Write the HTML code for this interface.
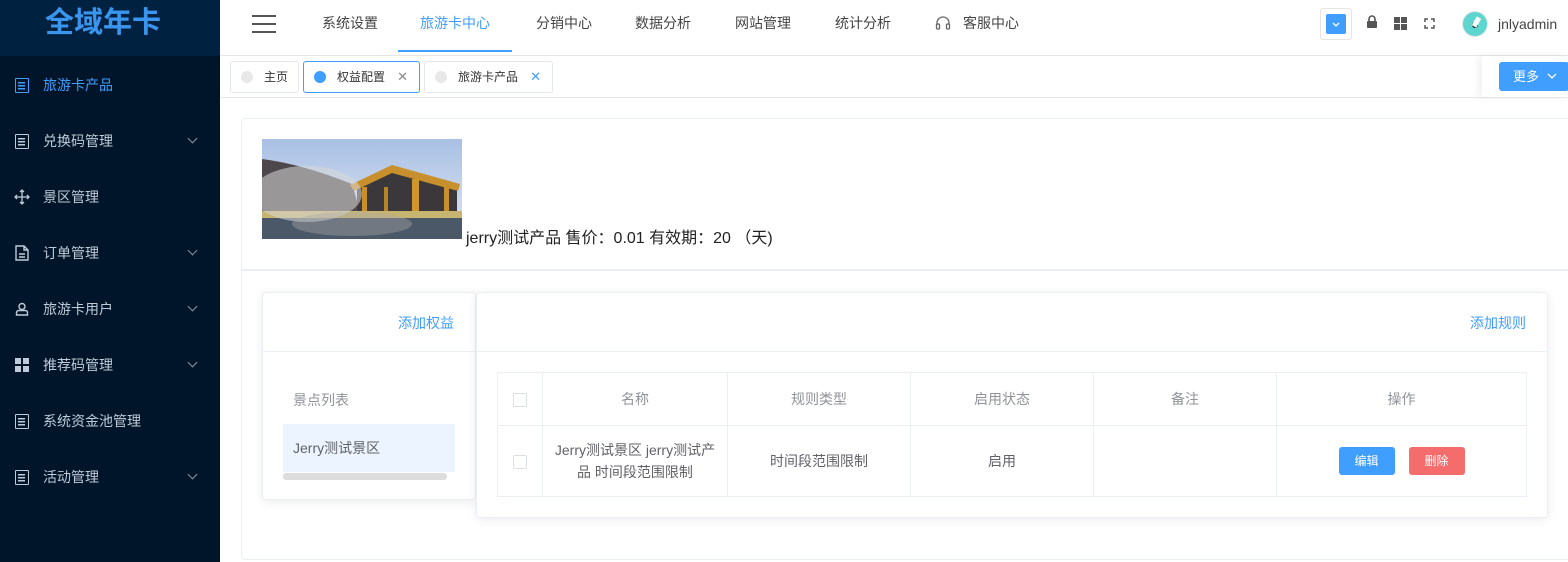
<!DOCTYPE html>
<html><head><meta charset="utf-8"><style>
*{box-sizing:border-box;margin:0;padding:0}
body{width:1568px;height:562px;overflow:hidden;font-family:"Liberation Sans","Noto Sans CJK SC",sans-serif;background:#fff;position:relative;color:#333}
.side{position:absolute;left:0;top:0;width:220px;height:562px;background:#001529}
.logo{height:56px;background:#002140;color:#3a95ee;font-size:29px;font-weight:bold;text-align:center;line-height:46px;padding-right:14px}
.mi{position:absolute;left:0;width:220px;height:56px;color:#bfcbd9;font-size:14px;line-height:56px;padding-left:43px}
.mi .ic{position:absolute;left:15px;top:21px;width:14px;height:15px;border:1.5px solid #bfcbd9;border-radius:1px;background:linear-gradient(#bfcbd9,#bfcbd9) 2px 3px/7px 1.5px no-repeat,linear-gradient(#bfcbd9,#bfcbd9) 2px 6px/7px 1.5px no-repeat,linear-gradient(#bfcbd9,#bfcbd9) 2px 9px/7px 1.5px no-repeat}
.mi .ar{position:absolute;left:189px;top:22px;width:7px;height:7px;border-right:1px solid #8a96a3;border-bottom:1px solid #8a96a3;transform:rotate(45deg)}
.top{position:absolute;left:220px;top:0;right:0;height:56px;border-bottom:1px solid #e6e6e6}
.nav{position:absolute;top:0;height:56px;line-height:46px;font-size:14px;color:#444}
.tags{position:absolute;left:220px;top:56px;right:0;height:42px;border-bottom:1px solid #e6e6e6}
.tag{position:absolute;top:5px;height:32px;border:1px solid #e4e7ed;border-radius:3px;font-size:12px;color:#333;line-height:30px;padding-left:33px}
.tag .d{position:absolute;left:10px;top:9px;width:12px;height:12px;border-radius:50%;background:#e8e8e8}
.tag .x{position:absolute;right:11px;top:0;color:#888;font-size:13px}
.card{position:absolute;border:1px solid #ebeef5;background:#fff;border-radius:4px;box-shadow:0 2px 10px rgba(0,0,0,.08)}
table{border-collapse:collapse;position:absolute;left:497px;top:372px;width:1030px;font-size:14px;color:#606266;text-align:center}
td{border:1px solid #ebeef5}
.cb{display:inline-block;width:14px;height:14px;border:1px solid #dcdfe6;border-radius:2px;background:#fff;vertical-align:middle}
</style></head><body>
<div class="side">
<div class="logo">全域年卡</div>
<div class="mi" style="top:57px;color:#409eff"><span class="ic" style="border-color:#409eff;background:linear-gradient(#409eff,#409eff) 2px 3px/7px 1.5px no-repeat,linear-gradient(#409eff,#409eff) 2px 6px/7px 1.5px no-repeat,linear-gradient(#409eff,#409eff) 2px 9px/7px 1.5px no-repeat"></span>旅游卡产品</div>
<div class="mi" style="top:113px"><span class="ic"></span>兑换码管理<span class="ar"></span></div>
<div class="mi" style="top:169px"><svg style="position:absolute;left:14px;top:20px" width="16" height="16" viewBox="0 0 16 16" fill="none" stroke="#bfcbd9" stroke-width="1.3"><path d="M8 1v14M1 8h14M6 3l2-2 2 2M6 13l2 2 2-2M3 6L1 8l2 2M13 6l2 2-2 2"/></svg>景区管理</div>
<div class="mi" style="top:225px"><svg style="position:absolute;left:15px;top:20px" width="14" height="16" viewBox="0 0 14 16" fill="none" stroke="#bfcbd9" stroke-width="1.4"><path d="M1 1h8l4 4v10H1z M9 1v4h4 M4 9h6M4 12h6"/></svg>订单管理<span class="ar"></span></div>
<div class="mi" style="top:281px"><svg style="position:absolute;left:15px;top:21px" width="14" height="14" viewBox="0 0 14 14" fill="none" stroke="#bfcbd9" stroke-width="1.4"><circle cx="7" cy="4.5" r="3"/><path d="M1.5 13v-2.5c0-1 1-2 2-2h7c1 0 2 1 2 2V13z"/></svg>旅游卡用户<span class="ar"></span></div>
<div class="mi" style="top:337px"><span style="position:absolute;left:15px;top:21px;width:14px;height:14px;background:linear-gradient(#bfcbd9,#bfcbd9) 0 0/6px 6px no-repeat,linear-gradient(#bfcbd9,#bfcbd9) 8px 0/6px 6px no-repeat,linear-gradient(#bfcbd9,#bfcbd9) 0 8px/6px 6px no-repeat,linear-gradient(#bfcbd9,#bfcbd9) 8px 8px/6px 6px no-repeat"></span>推荐码管理<span class="ar"></span></div>
<div class="mi" style="top:393px"><span class="ic"></span>系统资金池管理</div>
<div class="mi" style="top:449px"><span class="ic"></span>活动管理<span class="ar"></span></div>
</div>
<div class="top">
<div style="position:absolute;left:32px;top:15px;width:24px;height:18px;border-top:2px solid #555;border-bottom:2px solid #555"><div style="margin-top:6px;height:2px;background:#555"></div></div>
<div class="nav" style="left:102px">系统设置</div>
<div class="nav" style="left:178px;width:114px;text-align:center;color:#409eff;border-bottom:2px solid #409eff;height:52px">旅游卡中心</div>
<div class="nav" style="left:316px">分销中心</div>
<div class="nav" style="left:415px">数据分析</div>
<div class="nav" style="left:515px">网站管理</div>
<div class="nav" style="left:615px">统计分析</div>
<div class="nav" style="left:715px"><svg style="vertical-align:-3px;margin-right:12px" width="16" height="16" viewBox="0 0 16 16" fill="none" stroke="#666" stroke-width="1.3"><path d="M2 10V8a6 6 0 0 1 12 0v2"/><rect x="1.5" y="9" width="3" height="5" rx="1"/><rect x="11.5" y="9" width="3" height="5" rx="1"/></svg>客服中心</div>
<div style="position:absolute;left:1100px;top:8px;width:32px;height:32px;border:1px solid #e6e6e6;border-radius:3px"><div style="margin:5px;width:20px;height:20px;background:#409eff;border-radius:2px"><svg width="20" height="20" viewBox="0 0 20 20"><path d="M7 9l3 3 3-3" fill="none" stroke="#fff" stroke-width="1.3"/></svg></div></div>
<svg style="position:absolute;left:1146px;top:15px" width="12" height="13" viewBox="0 0 12 13"><path d="M3 6V4a3 3 0 0 1 6 0v2" fill="none" stroke="#555" stroke-width="1.6"/><rect x="1" y="6" width="10" height="7" rx="1" fill="#555"/></svg>
<div style="position:absolute;left:1174px;top:17px;width:13px;height:13px;background:linear-gradient(#555,#555) 0 0/6px 6px no-repeat,linear-gradient(#555,#555) 7px 0/6px 6px no-repeat,linear-gradient(#555,#555) 0 7px/6px 6px no-repeat,linear-gradient(#555,#555) 7px 7px/6px 6px no-repeat"></div>
<svg style="position:absolute;left:1204px;top:18px" width="11" height="11" viewBox="0 0 11 11" fill="none" stroke="#555" stroke-width="1.5"><path d="M1 4V1h3M7 1h3v3M10 7v3H7M4 10H1V7"/></svg>
<div style="position:absolute;left:1242px;top:11px;width:26px;height:26px;border-radius:50%;background:#5dd6cf;border:1px solid #e8e8e8"><div style="position:absolute;left:9px;top:10px;width:6px;height:6px;border-radius:50%;background:#222"></div><div style="position:absolute;left:11px;top:5px;width:5px;height:10px;background:#fff;transform:rotate(30deg)"></div></div>
<div style="position:absolute;left:1278px;top:16px;font-size:14px;color:#444">jnlyadmin</div>
</div>
<div class="tags">
<div class="tag" style="left:10px;width:69px">主页<span class="d"></span></div>
<div class="tag" style="left:83px;width:117px;border-color:#409eff">权益配置<span class="d" style="background:#409eff"></span><span class="x">✕</span></div>
<div class="tag" style="left:204px;width:129px">旅游卡产品<span class="d"></span><span class="x" style="color:#409eff">✕</span></div>
<div style="position:absolute;left:1262px;top:0;width:86px;height:41px;background:#fff;box-shadow:-4px 0 8px rgba(0,0,0,.06)"></div>
<div style="position:absolute;left:1279px;top:6px;width:70px;height:29px;background:#409eff;border-radius:3px;color:#fff;font-size:13px;line-height:29px;padding-left:14px">更多<svg style="position:absolute;left:48px;top:10px" width="10" height="8" viewBox="0 0 10 8"><path d="M1 2l4 4 4-4" fill="none" stroke="#fff" stroke-width="1.3"/></svg></div>
</div>
<div style="position:absolute;left:241px;top:118px;width:1330px;height:442px;border:1px solid #ebeef5;border-radius:4px;background:#fff"></div>
<div style="position:absolute;left:242px;top:269px;width:1326px;height:2px;background:#ebeef5"></div>
<svg style="position:absolute;left:262px;top:139px" width="200" height="100">
<defs><linearGradient id="s" x1="0" y1="0" x2="0" y2="1"><stop offset="0" stop-color="#a9c0e4"/><stop offset="1" stop-color="#dde6f2"/></linearGradient></defs>
<rect width="200" height="100" fill="url(#s)"/>
<path d="M0 20 Q40 25 90 45 L100 80 L0 80Z" fill="#4e484d"/>
<path d="M95 45 L130 28 L195 45 L195 82 L95 82Z" fill="#3a383a"/>
<path d="M88 46 L130 26 L198 45 L196 52 L130 34 L92 52Z" fill="#c8902c"/>
<rect x="100" y="48" width="5" height="34" fill="#c8902c"/><rect x="150" y="40" width="7" height="42" fill="#d0962c"/><rect x="182" y="46" width="5" height="36" fill="#c8902c"/><rect x="122" y="48" width="4" height="34" fill="#b88428"/>
<rect x="0" y="78" width="200" height="22" fill="#4b5867"/>
<rect x="0" y="72" width="200" height="7" fill="#c6b470"/>
<ellipse cx="45" cy="55" rx="55" ry="28" fill="#d8d8d8" opacity=".55"/>
<ellipse cx="90" cy="85" rx="60" ry="12" fill="#aaa" opacity=".4"/>
</svg>
<div style="position:absolute;left:466px;top:224px;font-size:16px;color:#222">jerry测试产品 售价：0.01 有效期：20 （天)</div>
<div class="card" style="left:262px;top:292px;width:214px;height:208px">
<div style="height:59px;border-bottom:1px solid #ebeef5;text-align:right;padding:20px 21px 0 0;color:#409eff;font-size:14px">添加权益</div>
<div style="position:absolute;left:30px;top:97px;color:#909399;font-size:14px">景点列表</div>
<div style="position:absolute;left:20px;top:131px;width:172px;height:48px;background:#ecf5ff;color:#606266;font-size:14px;line-height:48px;padding-left:10px">Jerry测试景区</div>
<div style="position:absolute;left:20px;top:180px;width:164px;height:7px;background:#ddd;border-radius:3px"></div>
</div>
<div class="card" style="left:476px;top:292px;width:1072px;height:226px">
<div style="height:59px;border-bottom:1px solid #ebeef5;text-align:right;padding:20px 21px 0 0;color:#409eff;font-size:14px">添加规则</div>
</div>
<table>
<tr style="height:53px;color:#909399"><td style="width:45px"><span class="cb"></span></td><td style="width:185px">名称</td><td style="width:183px">规则类型</td><td style="width:183px">启用状态</td><td style="width:183px">备注</td><td>操作</td></tr>
<tr style="height:71px"><td><span class="cb"></span></td><td style="line-height:22px;padding:0 10px">Jerry测试景区 jerry测试产品 时间段范围限制</td><td>时间段范围限制</td><td>启用</td><td></td><td><span style="display:inline-block;width:56px;height:28px;line-height:28px;background:#409eff;color:#fff;border-radius:3px;font-size:12px">编辑</span><span style="display:inline-block;width:56px;height:28px;line-height:28px;background:#f56c6c;color:#fff;border-radius:3px;font-size:12px;margin-left:14px">删除</span></td></tr>
</table>
</body></html>
